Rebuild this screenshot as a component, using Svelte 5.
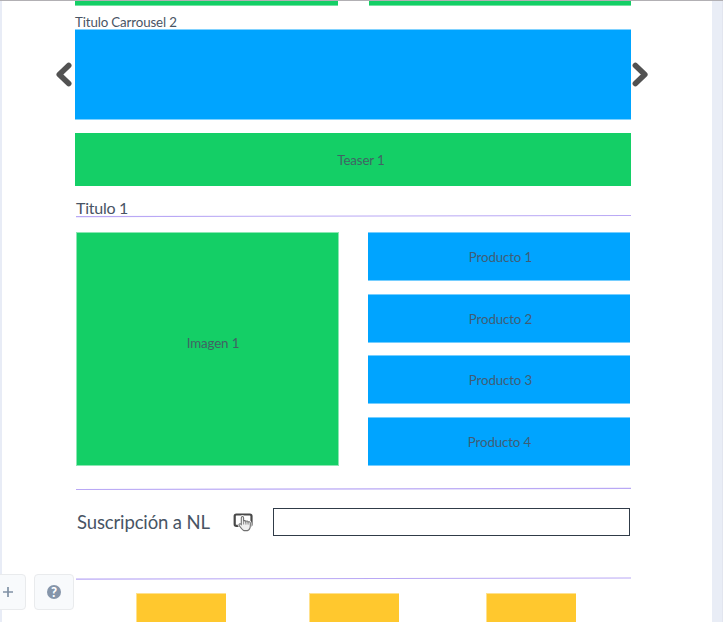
<script>
  const products = ['Producto 1', 'Producto 2', 'Producto 3', 'Producto 4'];
</script>

{#snippet divider(y1, y2)}
  <svg class="divider" width="557" height="4" viewBox="0 0 557 4">
    <line x1="1" {y1} x2="556" {y2} stroke="#b9a8f5" stroke-width="1.15" />
  </svg>
{/snippet}

<div class="page">
  <main>
    <div class="banners"><div></div><div></div></div>

    <h2 class="carousel-title"><span>Titulo Carrousel 2</span></h2>
    <section class="carousel">
      <svg width="20" height="28" viewBox="0 0 20 28">
        <path d="M13.7 4.4 4.3 13.5l9.4 9.1" />
      </svg>
      <div class="slide"></div>
      <svg width="20" height="28" viewBox="0 0 20 28">
        <path d="M4.4 4.4l9.4 9.1-9.4 9.1" />
      </svg>
    </section>

    <div class="teaser"><span>Teaser 1</span></div>

    <h2 class="title"><span>Titulo 1</span></h2>
    {@render divider(2.6, 1.5)}

    <section class="showcase">
      <div class="image"><span>Imagen 1</span></div>
      <div class="products">
        {#each products as product}
          <div class="product"><span>{product}</span></div>
        {/each}
      </div>
    </section>

    {@render divider(2.5, 1.4)}

    <form class="newsletter">
      <label for="email">Suscripción a NL</label>
      <svg width="22" height="20" viewBox="0 0 22 20">
        <rect x="2.7" y="2.5" width="16.8" height="11.4" rx="1.6" fill="#fff" stroke="#484848" stroke-width="2.2" />
        <path
          d="M9.3 12.4V5.9c0-1.8 2.3-1.8 2.3 0v3.5c.3-1.1 2.2-1 2.3.2.5-.9 2.1-.7 2.2.5.6-.7 2.2-.4 2.2.9v2.8c0 2.5-1.1 4.3-2.9 4.8H12c-1.6-.3-3-2.6-4.7-5-1-1.6.6-2.6 2-1.2z"
          fill="#f2f2f2" stroke="#fff" stroke-width="2.6" />
        <path
          d="M9.3 12.4V5.9c0-1.8 2.3-1.8 2.3 0v3.5c.3-1.1 2.2-1 2.3.2.5-.9 2.1-.7 2.2.5.6-.7 2.2-.4 2.2.9v2.8c0 2.5-1.1 4.3-2.9 4.8H12c-1.6-.3-3-2.6-4.7-5-1-1.6.6-2.6 2-1.2z"
          fill="#f0f0f0" stroke="#707070" stroke-width="1.1" />
        <path d="M11.6 9.2v3.3M13.9 9.7v2.9M16.1 10.3v2.3" fill="none" stroke="#808080" stroke-width=".9" />
      </svg>
      <input id="email" type="text" />
    </form>

    {@render divider(3.1, 2)}

    <section class="cards">
      <div></div><div></div><div></div>
    </section>
  </main>

  <aside class="tools">
    <button class="add" aria-label="+">
      <svg width="12" height="12" viewBox="0 0 12 12"><path d="M6 1v10M1 6h10" stroke="#8091a5" stroke-width="1.7" /></svg>
    </button>
    <button class="help" aria-label="?"><span>?</span></button>
  </aside>
</div>

<style>
  :global(body) {
    overflow: hidden;
  }
  .page {
    position: relative;
    box-sizing: border-box;
    width: 723px;
    height: 622px;
    overflow: hidden;
    background: linear-gradient(90deg, #e8ecf6 2px, #fff 2px 712px, #e9edf6 712px 722px, #e2e5ef 722px);
    border-top: 1px solid #b2b0b4;
    font-family: Lato, sans-serif;
    font-size: 13.3px;
    letter-spacing: -.13px;
    color: #485464;
  }
  main {
    width: 557px;
    margin-left: 75px;
    display: flex;
    flex-direction: column;
  }
  .banners {
    display: flex;
    gap: 31px;
    height: 5px;
  }
  .banners div {
    box-sizing: border-box;
    width: 263px;
    background: #14cf66;
    border-bottom: 1px solid #73e2a3;
  }
  .banners div:last-child {
    width: 262px;
  }
  h2 {
    margin: 0;
    font-weight: 400;
  }
  .carousel-title {
    height: 15px;
    margin-top: 8px;
    font-size: 13.3px;
    line-height: 16px;
  }
  .carousel {
    display: flex;
    align-items: center;
    margin: 0 -20px;
    height: 91px;
  }
  .carousel svg {
    flex: none;
    fill: none;
    stroke: #525252;
    stroke-width: 5.6;
    stroke-linecap: round;
    stroke-linejoin: round;
  }
  .slide {
    box-sizing: border-box;
    width: 556px;
    height: 91px;
    background: #00a4ff;
    border: solid #80d2ff;
    border-width: 1px 0;
  }
  .teaser {
    display: flex;
    align-items: center;
    justify-content: center;
    width: 556px;
    height: 53px;
    margin-top: 13px;
    box-sizing: border-box;
    background: #14cf66;
  }
  .teaser span {
    margin-left: 16px;
    opacity: .88;
  }
  .title {
    height: 28px;
    padding: 12px 0 0 1px;
    box-sizing: border-box;
    font-size: 16px;
    letter-spacing: -.25px;
    line-height: 19px;
  }
  .divider {
    display: block;
    flex: none;
  }
  .showcase {
    display: flex;
    gap: 29px;
    width: 554px;
    height: 234px;
    margin: 14px 0 21px 1px;
  }
  .image,
  .product {
    box-sizing: border-box;
    display: flex;
    align-items: center;
    justify-content: center;
  }
  .image {
    width: 263px;
    padding: 0 0 12px 11px;
    background: #14cf66;
    border: 1px solid #8be7b3;
  }
  .products {
    display: grid;
    grid-template-rows: 49px 49px 49px 49px;
    align-content: space-between;
    width: 262px;
  }
  .product {
    padding-left: 3px;
    background: #00a4ff;
    border: solid #75ceff;
    border-width: 1px 0;
  }
  .product:nth-child(even) {
    padding-top: 1px;
  }
  .product:last-child {
    padding-left: 1px;
  }
  .image span,
  .product span {
    opacity: .88;
  }
  .newsletter {
    display: flex;
    align-items: center;
    height: 28px;
    margin: 17px 0 40px 2px;
  }
  label {
    width: 155px;
    font-size: 18.5px;
    white-space: nowrap;
  }
  .newsletter svg {
    flex: none;
    margin-right: 19px;
  }
  input {
    box-sizing: border-box;
    width: 357px;
    height: 28px;
    padding: 0 8px;
    border: 1px solid #303b48;
    border-radius: 0;
    background: #fff;
    outline: 0;
  }
  .cards {
    display: grid;
    grid-template-columns: 90px 90px 90px;
    column-gap: 83px;
    height: 40px;
    margin: 13px 0 0 61px;
  }
  .cards div {
    background: #ffc82e;
    border: solid #ffe18d;
    border-width: 1px 0 0 1px;
  }
  .cards div:last-child {
    margin-left: 4px;
    margin-right: -4px;
  }
  .tools {
    position: absolute;
    left: -14px;
    top: 573px;
    display: flex;
    gap: 8px;
  }
  .tools button {
    box-sizing: border-box;
    display: flex;
    align-items: center;
    justify-content: center;
    width: 40px;
    height: 36px;
    padding: 0;
    border: 1px solid #e9ebed;
    border-radius: 4px;
    background: #f8fafc;
  }
  .tools .add {
    padding-left: 4px;
  }
  .help span {
    width: 14px;
    height: 14px;
    border-radius: 50%;
    background: #8595aa;
    color: #fff;
    font: 900 13px/14px Lato, sans-serif;
    text-align: center;
  }
</style>
